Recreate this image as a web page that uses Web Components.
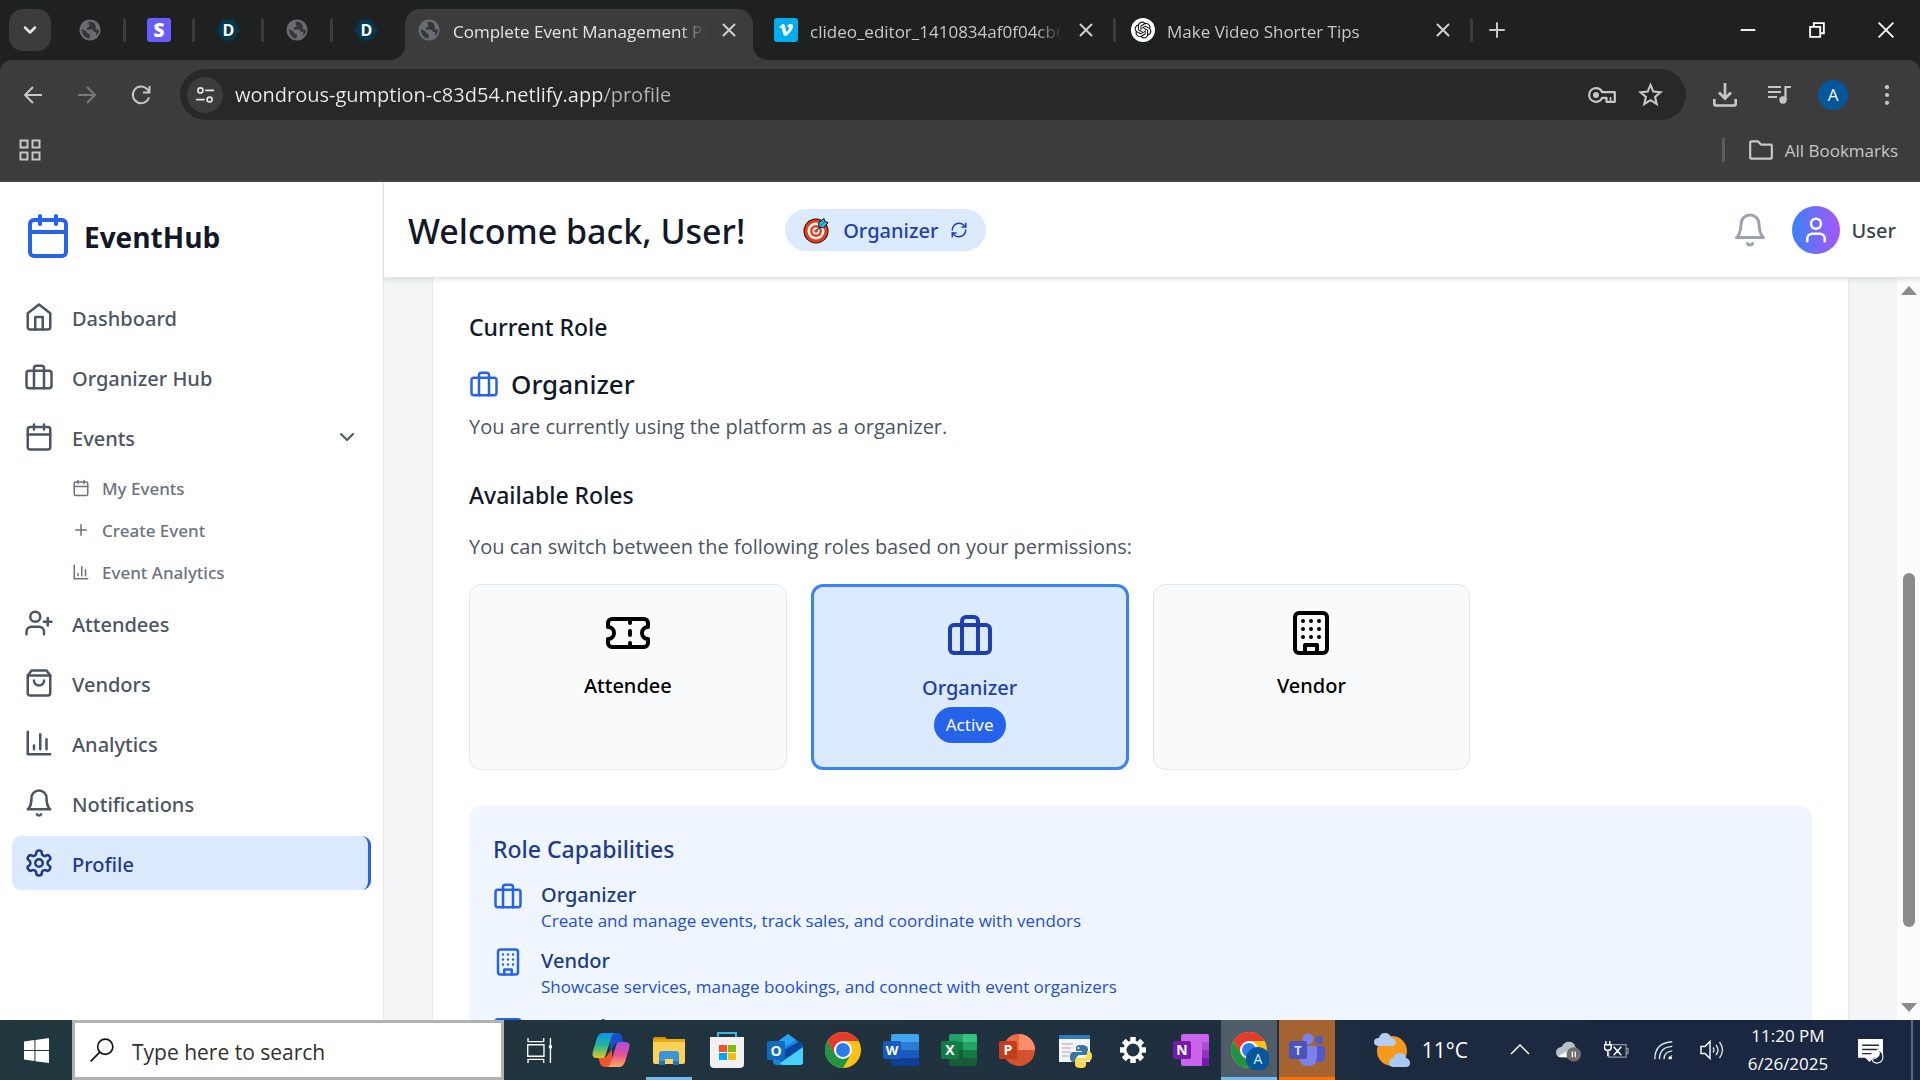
<!DOCTYPE html>
<html lang="en">
<head>
<meta charset="utf-8">
<title>Complete Event Management Platform</title>
<style>
  html, body {
    height: 100%;
    margin: 0;
  }
  body {
    --medium-font: "Noto Sans", "Open Sans", sans-serif;
    font-family: "Open Sans", "Noto Sans", sans-serif;
    font-size: 20px;
    overflow: hidden;
  }
</style>
</head>
<body>
<desktop-screen></desktop-screen>

<script>
/* ---------- icons ---------- */

// 24x24 stroked icons
const LINE_ICONS = {
  home: '<path d="m3 9 9-7 9 7v11a2 2 0 0 1-2 2H5a2 2 0 0 1-2-2z"/><path d="M9 22V12h6v10"/>',
  briefcase: '<rect width="20" height="14" x="2" y="7" rx="2"/><path d="M16 21V5a2 2 0 0 0-2-2h-4a2 2 0 0 0-2 2v16"/>',
  calendar: '<rect width="18" height="18" x="3" y="4" rx="2"/><path d="M16 2v4M8 2v4M3 10h18"/>',
  plus: '<path d="M5 12h14M12 5v14"/>',
  chart: '<path d="M3 3v18h18M18 17V9M13 17V5M8 17v-3"/>',
  'user-plus': '<path d="M16 21v-2a4 4 0 0 0-4-4H6a4 4 0 0 0-4 4v2"/><circle cx="9" cy="7" r="4"/><path d="M19 8v6M22 11h-6"/>',
  bag: '<path d="M6 2 3 6v14a2 2 0 0 0 2 2h14a2 2 0 0 0 2-2V6l-3-4Z"/><path d="M3 6h18M16 10a4 4 0 0 1-8 0"/>',
  bell: '<path d="M6 8a6 6 0 0 1 12 0c0 7 3 9 3 9H3s3-2 3-9"/><path d="M10.3 21a1.94 1.94 0 0 0 3.4 0"/>',
  settings: '<path d="M12.22 2h-.44a2 2 0 0 0-2 2v.18a2 2 0 0 1-1 1.73l-.43.25a2 2 0 0 1-2 0l-.15-.08a2 2 0 0 0-2.73.73l-.22.38a2 2 0 0 0 .73 2.73l.15.1a2 2 0 0 1 1 1.72v.51a2 2 0 0 1-1 1.74l-.15.09a2 2 0 0 0-.73 2.73l.22.38a2 2 0 0 0 2.73.73l.15-.08a2 2 0 0 1 2 0l.43.25a2 2 0 0 1 1 1.73V20a2 2 0 0 0 2 2h.44a2 2 0 0 0 2-2v-.18a2 2 0 0 1 1-1.73l.43-.25a2 2 0 0 1 2 0l.15.08a2 2 0 0 0 2.73-.73l.22-.39a2 2 0 0 0-.73-2.73l-.15-.08a2 2 0 0 1-1-1.74v-.5a2 2 0 0 1 1-1.74l.15-.09a2 2 0 0 0 .73-2.73l-.22-.38a2 2 0 0 0-2.73-.73l-.15.08a2 2 0 0 1-2 0l-.43-.25a2 2 0 0 1-1-1.73V4a2 2 0 0 0-2-2z"/><circle cx="12" cy="12" r="3"/>',
  ticket: '<path d="M2 9a3 3 0 0 1 0 6v2a2 2 0 0 0 2 2h16a2 2 0 0 0 2-2v-2a3 3 0 0 1 0-6V7a2 2 0 0 0-2-2H4a2 2 0 0 0-2 2Z"/><path d="M13 5v2M13 17v2M13 11v2"/>',
  building: '<rect width="16" height="20" x="4" y="2" rx="2"/><path d="M9 22v-4h6v4M8 6h.01M12 6h.01M16 6h.01M8 10h.01M12 10h.01M16 10h.01M8 14h.01M12 14h.01M16 14h.01"/>',
  refresh: '<path d="M3 12a9 9 0 0 1 9-9 9.75 9.75 0 0 1 6.74 2.74L21 8"/><path d="M21 3v5h-5M21 12a9 9 0 0 1-9 9 9.75 9.75 0 0 1-6.74-2.74L3 16"/><path d="M8 16H3v5"/>',
  user: '<path d="M19 21v-2a4 4 0 0 0-4-4H9a4 4 0 0 0-4 4v2"/><circle cx="12" cy="7" r="4"/>',
  'chevron-down': '<path d="m6 9 6 6 6-6"/>',
  back: '<path d="M21 12H4.500M12 4l-8 8 8 8" stroke-linecap="butt" stroke-linejoin="miter"/>',
  forward: '<path d="M3 12h16.500M12 4l8 8-8 8" stroke-linecap="butt" stroke-linejoin="miter"/>',
  reload: '<path d="M20 14.500A8.300 8.300 0 1 1 18 6l2 2.500M20.500 3v6.500H14" stroke-linecap="butt" stroke-linejoin="miter"/>',
  tune: '<circle cx="6.500" cy="6.500" r="3"/><path d="M13 6.500h9M2 17.500h9"/><circle cx="17.500" cy="17.500" r="3"/>',
  folder: '<path d="M2 5q0-1 1-1h6l3 3h9q1 0 1 1v11q0 1-1 1H3q-1 0-1-1z"/>',
  apps: '<path d="M2.500 2.500h7v7h-7zM14.500 2.500h7v7h-7zM2.500 14.500h7v7h-7zM14.500 14.500h7v7h-7z" stroke-linejoin="miter"/>',
  close: '<path d="M6.500 6.500l11 11M17.500 6.500l-11 11"/>',
  minimise: '<path d="M4 12h16" stroke-linecap="butt"/>',
  restore: '<path d="M4.500 8.500h11v11h-11zM8.500 8V4.500h11v11H16" stroke-linejoin="miter" stroke-linecap="butt"/>',
  quit: '<path d="M4 4l16 16M20 4 4 20" stroke-linecap="butt"/>',
  caret: '<path d="m3 16 9-9 9 9" stroke-linecap="butt" stroke-linejoin="miter"/>',
  search: '<circle cx="15" cy="9" r="7"/><path d="M10 14 2 22"/>'
};

// icons that carry their own fills and view boxes
const ART_ICONS = {
  globe: ['0 0 24 24', '<path fill="#696d73" d="M12 1.500C6.200 1.500 1.500 6.200 1.500 12S6.200 22.500 12 22.500 22.500 17.800 22.500 12 17.800 1.500 12 1.500z"/><path fill="#353638" d="M4 11c2 1 4 1.500 5 3.500s3 1 3 3-1 2-1 3c-4-.5-7.500-4.500-7-9.500zM10 4c1.500 1 0 2.500 1.500 3.500S9 9 8.500 10.500s3 1 5 1 1.500 2.500 3.500 2.500 1.500 2.500 1 4c2-1.500 3-3.500 3-6 0-1-2 0-3-1s.5-2-.5-3.500S17 5.500 15.500 4.500 12 3.500 10 4z"/>'],
  stripe: ['0 0 24 24', '<rect width="24" height="24" rx="3" fill="#675dff"/><text x="12" y="19" text-anchor="middle" font-family="Open Sans" font-weight="800" font-size="19" fill="#fff">S</text>'],
  dee: ['0 0 24 24', '<path d="M6.500 1.500h11L23.500 12l-6 10.500h-11L.5 12z" fill="#04384f"/><text x="12.500" y="17.500" text-anchor="middle" font-family="Open Sans" font-weight="700" font-size="16" fill="#fff">D</text>'],
  vimeo: ['0 0 24 24', '<rect width="24" height="24" rx="3" fill="#00adef"/><path transform="translate(3.500 3.500) scale(.7)" fill="#fff" d="M22 7.420c-.09 1.950-1.450 4.620-4.080 8.020C15.200 18.970 12.900 20.740 11.030 20.740c-1.160 0-2.140-1.070-2.940-3.210L6.480 11.640C5.900 9.500 5.250 8.430 4.560 8.430c-.15 0-.68.32-1.580.95L2.040 8.160c1-.87 1.970-1.750 2.940-2.620 1.330-1.150 2.320-1.750 2.980-1.810 1.570-.15 2.530.92 2.890 3.210.39 2.480.66 4.020.81 4.620.45 2.050.95 3.080 1.490 3.080.42 0 1.050-.67 1.900-2 .84-1.330 1.290-2.340 1.350-3.030.12-1.150-.33-1.720-1.350-1.720-.48 0-.97.11-1.490.33.99-3.240 2.880-4.820 5.670-4.730 2.070.06 3.050 1.400 2.930 4.030z"/>'],
  knot: ['0 0 24 24', '<circle cx="12" cy="12" r="12" fill="#fff"/><path transform="translate(3.600 3.600) scale(.7)" fill="#111" d="M22.2819 9.8211a5.9847 5.9847 0 0 0-.5157-4.9108 6.0462 6.0462 0 0 0-6.5098-2.9A6.0651 6.0651 0 0 0 4.9807 4.1818a5.9847 5.9847 0 0 0-3.9977 2.9 6.0462 6.0462 0 0 0 .7427 7.0966 5.98 5.98 0 0 0 .511 4.9107 6.051 6.051 0 0 0 6.5146 2.9001A5.9847 5.9847 0 0 0 13.2599 24a6.0557 6.0557 0 0 0 5.7718-4.2058 5.9894 5.9894 0 0 0 3.9977-2.9001 6.0557 6.0557 0 0 0-.7475-7.0729zm-9.022 12.6081a4.4755 4.4755 0 0 1-2.8764-1.0408l.1419-.0804 4.7783-2.7582a.7948.7948 0 0 0 .3927-.6813v-6.7369l2.02 1.1686a.071.071 0 0 1 .038.052v5.5826a4.504 4.504 0 0 1-4.4945 4.4944zm-9.6607-4.1254a4.4708 4.4708 0 0 1-.5346-3.0137l.142.0852 4.783 2.7582a.7712.7712 0 0 0 .7806 0l5.8428-3.3685v2.3324a.0804.0804 0 0 1-.0332.0615L9.74 19.9502a4.4992 4.4992 0 0 1-6.1408-1.6464zM2.3408 7.8956a4.485 4.485 0 0 1 2.3655-1.9728V11.6a.7664.7664 0 0 0 .3879.6765l5.8144 3.3543-2.0201 1.1685a.0757.0757 0 0 1-.071 0l-4.8303-2.7865A4.504 4.504 0 0 1 2.3408 7.872zm16.5963 3.8558L13.1038 8.364 15.1192 7.2a.0757.0757 0 0 1 .071 0l4.8303 2.7913a4.4944 4.4944 0 0 1-.6765 8.1042v-5.6772a.79.79 0 0 0-.407-.667zm2.0107-3.0231l-.142-.0852-4.7735-2.7818a.7759.7759 0 0 0-.7854 0L9.409 9.2297V6.8974a.0662.0662 0 0 1 .0284-.0615l4.8303-2.7866a4.4992 4.4992 0 0 1 6.6802 4.66zM8.3065 12.863l-2.02-1.1638a.0804.0804 0 0 1-.038-.0567V6.0742a4.4992 4.4992 0 0 1 7.3757-3.4537l-.142.0805L8.704 5.459a.7948.7948 0 0 0-.3927.6813zm1.0976-2.3654l2.602-1.4998 2.6069 1.4998v2.9994l-2.5974 1.4997-2.6067-1.4997Z"/>'],
  key: ['0 0 28 16', '<path d="M8 1.200a6.800 6.800 0 1 0 6.200 9.600H18.500V14.800H26.800V5.200H14.200A6.800 6.800 0 0 0 8 1.200z" fill="none" stroke="#c7c7c7" stroke-width="2.200" stroke-linejoin="round"/><circle cx="8" cy="8" r="3" fill="#c7c7c7"/><path d="M22.500 14v-4" stroke="#c7c7c7" stroke-width="1.600"/>'],
  star: ['0 0 24 24', '<path d="m12 2.800 2.700 6.400 6.900.6-5.200 4.500 1.600 6.800-6-3.600-6 3.600 1.600-6.800-5.200-4.500 6.900-.6z" fill="none" stroke="#c7c7c7" stroke-width="2"/>'],
  download: ['0 0 24 24', '<path d="M12 0v15M6 9.500l6 6 6-6M1.300 16v4.500q0 2 2 2h17.400q2 0 2-2V16" fill="none" stroke="#c7c7c7" stroke-width="2.700"/>'],
  queue: ['0 0 24 24', '<path d="M1 4h13M1 9h13M1 14h9" stroke="#c7c7c7" stroke-width="2"/><circle cx="16" cy="17" r="3.700" fill="#c7c7c7"/><path d="M18.500 17V4H24" fill="none" stroke="#c7c7c7" stroke-width="2.200"/>'],
  dots: ['0 0 24 24', '<g fill="#c7c7c7"><circle cx="12" cy="3.500" r="2.300"/><circle cx="12" cy="12" r="2.300"/><circle cx="12" cy="20.500" r="2.300"/></g>'],
  target: ['0 0 28 28', '<circle cx="13" cy="15" r="12.500" fill="#111"/><circle cx="13" cy="15" r="11.500" fill="#f03a17"/><circle cx="13" cy="15" r="8.500" fill="#fff"/><circle cx="13" cy="15" r="6" fill="#f03a17"/><circle cx="13" cy="15" r="3.500" fill="#fff"/><circle cx="13" cy="15" r="1.800" fill="#f03a17"/><path d="M13 15 19 9" stroke="#155a7a" stroke-width="1.500"/><path d="m16 11-.5-4L21 2.500l1 3 3 1L20.500 12z" fill="#29b6e8" stroke="#111"/><path d="m16 11 6-5.500" stroke="#0b6d95"/>'],
  windows: ['0 0 24 24', '<path fill="#fff" d="M0 3.400 10 2v9.500H0zM11 1.800 24 0v11.500H11zM0 12.500h10V22L0 20.600zM11 12.500h13V24l-13-1.800z"/>'],
  taskview: ['0 0 24 24', '<path d="M1 0v3.500h15V0M1 24v-3.500h15V24M.7 6.500h15.600v11H.7zM22.500 0v24" fill="none" stroke="#fff" stroke-width="1.300"/><path d="M21 7h3v3h-3z" fill="#fff"/>'],
  copilot: ['0 0 40 40', '<defs><linearGradient id="a" x2="0" y2="1"><stop stop-color="#1190f0"/><stop offset=".5" stop-color="#21b89a"/><stop offset="1" stop-color="#e6c722"/></linearGradient><linearGradient id="b" x2="0" y2="1"><stop stop-color="#a052e8"/><stop offset=".5" stop-color="#e94f92"/><stop offset="1" stop-color="#ffa95c"/></linearGradient></defs><path d="M19 3h7q4 0 5 4l2 6h-8l-6 8z" fill="#1b50c4"/><path d="M21 37h-7q-4 0-5-4l-2-6h8l6-8z" fill="#f0542c"/><path d="M12 3h12q-3 1-4 5l-5 16q-1 4-4 4H5q-5 0-3-7l4-13q2-5 6-5z" fill="url(#a)"/><path d="M28 37H16q3-1 4-5l5-16q1-4 4-4h6q5 0 3 7l-4 13q-2 5-6 5z" fill="url(#b)"/>'],
  explorer: ['0 0 40 40', '<path d="M4 9q0-2 2-2h10l4 4H4z" fill="#d49200"/><path d="M4 9h32v23q0 2-2 2H6q-2 0-2-2z" fill="#ffd257"/><path d="M4 12V9h12l3 0h17v3z" fill="#eaaa12"/><path d="M10 34V24q0-3 3-3h14q3 0 3 3v10h-6v-5h-8v5z" fill="#3995dc"/><path d="M10 31h6v4h-6zM24 31h6v4h-6z" fill="#2075ba"/>'],
  store: ['0 0 40 40', '<path d="M11 8V3h18v5" fill="none" stroke="#31b9ee" stroke-width="2"/><path d="M3 7h34v27q0 4-4 4H7q-4 0-4-4z" fill="#f1f1f1"/><path d="M12 15h8v7h-8z" fill="#f35325"/><path d="M21 15h8v7h-8z" fill="#81bc06"/><path d="M12 23h8v7h-8z" fill="#05a6f0"/><path d="M21 23h8v7h-8z" fill="#ffba08"/>'],
  outlook: ['0 0 40 40', '<path d="M8 15 23 4l15 11v17q0 3-3 3H12q-4 0-4-4z" fill="#1687dd"/><path d="M8 15 23 4l8 6-23 14z" fill="#2ba4f0"/><path d="m12 24 23-13 3 4v4L16 32z" fill="#0b47a0"/><path d="m38 17-23 16q1 2 4 2h16q3 0 3-3z" fill="#46d0fa"/><rect x="2" y="11" width="18" height="19" rx="2" fill="#0f6cbd"/><text x="11" y="26" text-anchor="middle" font-family="Open Sans" font-weight="700" font-size="14" fill="#fff">O</text>'],
  chrome: ['0 0 40 40', '<circle cx="20" cy="20" r="18" fill="#fbc116"/><path d="M20 11h15.600a18 18 0 0 0-31.200 0L12 24.500z" fill="#e33b2e"/><path d="M4.400 11 12.200 24.500 20 29l7.800-4.500L20 38A18 18 0 0 1 4.400 11z" fill="#229342"/><circle cx="20" cy="20" r="9" fill="#fff"/><circle cx="20" cy="20" r="7" fill="#2b7de9"/>'],
  word: ['0 0 40 40', '<path d="M12 4h24q2 0 2 2v6H10V6q0-2 2-2z" fill="#41a5ee"/><path d="M10 12h28v8H10z" fill="#2b7cd3"/><path d="M10 20h28v8H10z" fill="#185abd"/><path d="M10 28h28v6q0 2-2 2H12q-2 0-2-2z" fill="#103f91"/><rect x="2" y="11" width="18" height="18" rx="2" fill="#185abd"/><text x="11" y="25" text-anchor="middle" font-family="Open Sans" font-weight="700" font-size="13" fill="#fff">W</text>'],
  excel: ['0 0 40 40', '<path d="M12 4h12v8H10V6q0-2 2-2z" fill="#21a366"/><path d="M24 4h12q2 0 2 2v6H24z" fill="#33c481"/><path d="M10 12h14v8H10z" fill="#107c41"/><path d="M24 12h14v8H24z" fill="#21a366"/><path d="M10 20h14v8H10z" fill="#185c37"/><path d="M24 20h14v8H24z" fill="#107c41"/><path d="M10 28h28v6q0 2-2 2H12q-2 0-2-2z" fill="#185c37"/><rect x="2" y="11" width="18" height="18" rx="2" fill="#107c41"/><text x="11" y="25" text-anchor="middle" font-family="Open Sans" font-weight="700" font-size="14" fill="#fff">X</text>'],
  powerpoint: ['0 0 40 40', '<circle cx="22" cy="20" r="16" fill="#d35230"/><path d="M22 4a16 16 0 0 1 16 16H22z" fill="#ff8f6b"/><path d="M22 4A16 16 0 0 0 6 20h16z" fill="#ed6c47"/><rect x="2" y="11" width="18" height="18" rx="2" fill="#c43e1c"/><text x="11" y="25" text-anchor="middle" font-family="Open Sans" font-weight="700" font-size="14" fill="#fff">P</text>'],
  python: ['0 0 40 40', '<path d="M4 5h31v27H4z" fill="#f4f4f4"/><path d="M4 5h31v4H4z" fill="#2d7cc0"/><path d="M7 14h11M7 18h9M7 22h9M7 26h7" stroke="#c2c2c2" stroke-width="1.500"/><path d="M26 15c-5 0-5 2-5 4v2h6v1h-8c-3 0-4 2-4 5s1 5 4 5h2v-3c0-2 2-4 4-4h5c2 0 3-1 3-3v-3c0-2-2-4-7-4z" fill="#3874a6"/><path d="M26 38c5 0 5-2 5-4v-2h-6v-1h8c3 0 4-2 4-5s-1-4-4-5h-1v4c0 2-2 3-4 3h-5c-2 0-3 1-3 3v3c0 3 2 4 6 4z" fill="#ffd94d"/><circle cx="23.500" cy="18" r="1" fill="#fff"/>'],
  gear: ['0 0 40 40', '<g stroke="#fff" stroke-width="5.500"><path d="M20 7v26M7 20h26M10.800 10.800l18.400 18.400M29.200 10.800 10.800 29.200"/></g><circle cx="20" cy="20" r="9.500" fill="#fff"/><circle cx="20" cy="20" r="6.500" fill="#20323f"/>'],
  onenote: ['0 0 40 40', '<path d="M12 4h24q2 0 2 2v28q0 2-2 2H12q-2 0-2-2V6q0-2 2-2z" fill="#ca64ea"/><path d="M31 12h7v8h-7z" fill="#ae4bd5"/><path d="M31 20h7v8h-7z" fill="#9332bf"/><path d="M31 28h7v6q0 2-2 2h-5z" fill="#7719aa"/><rect x="2" y="11" width="18" height="18" rx="2" fill="#7719aa"/><text x="11" y="25" text-anchor="middle" font-family="Open Sans" font-weight="700" font-size="14" fill="#fff">N</text>'],
  'chrome-a': ['0 0 40 40', '<circle cx="20" cy="20" r="18" fill="#fbc116"/><path d="M20 11h15.600a18 18 0 0 0-31.200 0L12 24z" fill="#e33b2e"/><path d="M4.400 11 12.200 24.500 27.800 24.500 20 38A18 18 0 0 1 4.400 11z" fill="#229342"/><circle cx="20" cy="20" r="9" fill="#fff"/><circle cx="20" cy="20" r="7" fill="#2b7de9"/><circle cx="29" cy="29" r="12" fill="#06569b"/><text x="29" y="34" text-anchor="middle" font-family="Open Sans" font-size="14" fill="#dbe8f4">A</text>'],
  teams: ['0 0 40 40', '<circle cx="32" cy="10" r="4" fill="#5059c9"/><path d="M28 16h8q2 0 2 2v8q0 6-6 6h-4z" fill="#5059c9"/><circle cx="21" cy="9" r="5.500" fill="#7b83eb"/><path d="M13 16h15q2 0 2 2v8q0 10-9 10t-9-10z" fill="#7b83eb"/><rect x="2" y="11" width="18" height="18" rx="2" fill="#4b53bc"/><text x="11" y="25" text-anchor="middle" font-family="Open Sans" font-weight="700" font-size="13" fill="#d9dcff">T</text>'],
  weather: ['0 0 36 36', '<circle cx="18" cy="19" r="15" fill="#f6991d"/><path d="M5 14q-5 0-5-4t5-4q1-5 6-5t6 5q5 0 5 4t-4 4z" fill="#b4cdf0"/><path d="M20 35q-5 0-5-4t4-5q2-5 7-5t6 5q4 1 4 5t-4 4z" fill="#a9c8f2"/>'],
  onedrive: ['0 0 26 24', '<path d="M4 19q-4-1-4-5 0-5 6-6 3-6 9-5 4 1 5 5 4 2 3 11z" fill="#b9bfc7"/><path d="M2 18 15 11l4 8H5z" fill="#fff"/><circle cx="18.500" cy="16" r="7.500" fill="#6e6e6e"/><path d="M17 13v6M20 13v6" stroke="#fff" stroke-width="1.300"/>'],
  battery: ['0 0 26 24', '<path d="M8 6h15v13H5v-5M23 10h2v5h-2" fill="none" stroke="#8e97a3" stroke-width="1.300"/><path d="M2 2v4M6 2v4M.5 6h7v3q0 3-3.500 3T.5 9zM4 12v6M10 8l8 9M18 8l-8 9" fill="none" stroke="#fff" stroke-width="1.500"/>'],
  wifi: ['0 0 24 24', '<g fill="none" stroke="#dfe3e8" stroke-width="1.500"><path d="M2 22Q2 4 21 3M7 22Q7 9 21 8M12 22q0-8 9-9"/></g><path d="M17 22q0-3 4-4" fill="none" stroke="#dfe3e8"/><circle cx="19" cy="20.500" r="1.800" fill="#fff"/>'],
  volume: ['0 0 24 24', '<path d="M1 8.500h4l5-5v17l-5-5H1z" fill="none" stroke="#fff" stroke-width="1.400"/><path d="M13 9.500q2 2.500 0 5M16 7q4 5 0 10M19.500 4q6 8 0 16" fill="none" stroke="#d6dae0" stroke-width="1.400"/>'],
  notes: ['0 0 26 26', '<path d="M1 2h24v18H16l-4 4-4-4H1z" fill="#fff"/><path d="M5 8h16M5 12h16M5 16h9" stroke="#1b2a40" stroke-width="1.400"/><path d="M20 12q3 4 0 7t-6 2q2 5 6 4 5-1 5-6 0-5-5-7z" fill="#1b2a40" stroke="#fff"/>']
};

const template_ui_icon = document.createElement('template');
template_ui_icon.innerHTML = `
<style>
  :host {
    display: inline-flex;
    flex: none;
  }
  svg {
    display: block;
  }
</style>
`

class UiIcon extends HTMLElement {
  constructor() {
    super();
    this.attachShadow({mode: 'open'});
    this.shadowRoot.appendChild(template_ui_icon.content.cloneNode(true));
  }

  connectedCallback() {
    const name = this.getAttribute('name');
    const size = this.getAttribute('size') || 24;
    const art = ART_ICONS[name];
    const holder = document.createElement('template');
    if (art) {
      holder.innerHTML = `<svg width="${size}" height="${size}" viewBox="${art[0]}" aria-hidden="true">${art[1]}</svg>`;
    } else {
      const stroke = this.getAttribute('stroke') || 2;
      holder.innerHTML = `<svg width="${size}" height="${size}" viewBox="0 0 24 24" fill="none" stroke="currentColor" stroke-width="${stroke}" stroke-linecap="round" stroke-linejoin="round" aria-hidden="true">${LINE_ICONS[name]}</svg>`;
    }
    this.shadowRoot.appendChild(holder.content);
  }
}

/* ---------- browser frame ---------- */

const template_browser_tab = document.createElement('template');
template_browser_tab.innerHTML = `
<style>
  :host {
    display: flex;
    align-items: center;
    gap: 12px;
    position: relative;
    box-sizing: border-box;
    width: 348px;
    height: 51px;
    padding: 0 12px 9px;
    color: #c7c7c7;
    font-size: 17px;
  }
  :host([active]) {
    background: #3c3c3c;
    border-radius: 15px 15px 0 0;
    color: #e3e3e3;
  }
  :host([active])::before,
  :host([active])::after {
    content: "";
    position: absolute;
    bottom: 0;
    width: 15px;
    height: 15px;
  }
  :host([active])::before {
    left: -15px;
    background: radial-gradient(circle at 0 0, transparent 15px, #3c3c3c 15px);
  }
  :host([active])::after {
    right: -15px;
    background: radial-gradient(circle at 100% 0, transparent 15px, #3c3c3c 15px);
  }
  :host(:not([active]))::after {
    content: "";
    position: absolute;
    right: -6px;
    top: 9px;
    width: 3px;
    height: 24px;
    border-radius: 2px;
    background: #3c3c3c;
  }
  .title {
    flex: 1;
    overflow: hidden;
    padding-top: 3px;
    white-space: nowrap;
    line-height: 24px;
    -webkit-mask-image: linear-gradient(to right, #000 90%, transparent);
    mask-image: linear-gradient(to right, #000 90%, transparent);
  }
  button {
    display: flex;
    padding: 0;
    border: none;
    background: none;
    color: #d0d0d0;
  }
</style>
<ui-icon size="24"></ui-icon>
<span class="title"><slot></slot></span>
<button aria-label="Close tab"><ui-icon name="close" size="24"></ui-icon></button>
`

class BrowserTab extends HTMLElement {
  constructor() {
    super();
    this.attachShadow({mode: 'open'});
    const content = template_browser_tab.content.cloneNode(true);
    content.querySelector('ui-icon').setAttribute('name', this.getAttribute('icon'));
    this.shadowRoot.appendChild(content);
  }
}

const template_browser_frame = document.createElement('template');
template_browser_frame.innerHTML = `
<style>
  :host {
    display: block;
    background: #1f2120;
    color: #c7c7c7;
  }
  button {
    display: flex;
    align-items: center;
    justify-content: center;
    padding: 0;
    border: none;
    background: none;
    color: inherit;
    font: inherit;
  }
  .strip {
    display: flex;
    align-items: center;
    height: 60px;
    padding-left: 9px;
  }
  .menu {
    width: 42px;
    height: 42px;
    margin-right: 4px;
    border-radius: 14px;
    background: #3c3c3c;
    color: #e3e3e3;
  }
  .pinned {
    width: 69px;
    height: 24px;
    position: relative;
  }
  .pinned + .pinned::before {
    content: "";
    position: absolute;
    left: -1px;
    width: 3px;
    height: 24px;
    border-radius: 2px;
    background: #3c3c3c;
  }
  .tabs {
    display: flex;
    align-self: flex-end;
    gap: 9px;
    margin-left: 5px;
  }
  .new {
    width: 48px;
    margin-left: 6px;
  }
  .window {
    display: flex;
    margin-left: auto;
    color: #fff;
  }
  .window button {
    width: 69px;
  }
  .panel {
    background: #3c3c3c;
    border-bottom: 2px solid #474747;
    border-radius: 12px 12px 0 0;
  }
  .toolbar {
    display: flex;
    align-items: center;
    padding: 9px 6px;
  }
  .toolbar > button {
    width: 54px;
    height: 36px;
  }
  .dim {
    color: #7a7a7a;
  }
  .omnibox {
    display: flex;
    flex: 1;
    align-items: center;
    gap: 12px;
    height: 51px;
    margin: 0 12px;
    padding: 0 12px 0 7px;
    box-sizing: border-box;
    border-radius: 26px;
    background: #282828;
  }
  .site {
    width: 36px;
    height: 36px;
    border-radius: 18px;
    background: #3c3c3c;
    color: #e3e3e3;
  }
  input {
    flex: 1;
    min-width: 0;
    padding: 0;
    border: none;
    outline: none;
    font: inherit;
    font-size: 20px;
    color: transparent;
    background: linear-gradient(to right, #ececec 367px, #b4b4b4 367px);
    -webkit-background-clip: text;
    background-clip: text;
  }
  .actions {
    display: flex;
  }
  .actions button {
    width: 48px;
  }
  .avatar {
    width: 30px;
    height: 30px;
    border-radius: 15px;
    background: #06569b;
    color: #fff;
    font-size: 17px;
    line-height: 30px;
  }
  .bookmarks {
    display: flex;
    align-items: center;
    justify-content: space-between;
    height: 51px;
    padding: 0 22px 9px 18px;
    box-sizing: border-box;
  }
  .all {
    gap: 11px;
    height: 24px;
    padding-left: 23px;
    border-left: 3px solid #5c5c5c;
    font-size: 17px;
  }
</style>
<div class="strip">
  <button class="menu" aria-label="Search tabs"><ui-icon name="chevron-down" size="20" stroke="3"></ui-icon></button>
  <button class="pinned" aria-label="Tab"><ui-icon name="globe" size="24"></ui-icon></button>
  <button class="pinned" aria-label="Tab"><ui-icon name="stripe" size="24"></ui-icon></button>
  <button class="pinned" aria-label="Tab"><ui-icon name="dee" size="24"></ui-icon></button>
  <button class="pinned" aria-label="Tab"><ui-icon name="globe" size="24"></ui-icon></button>
  <button class="pinned" aria-label="Tab"><ui-icon name="dee" size="24"></ui-icon></button>
  <div class="tabs">
    <browser-tab icon="globe" active>Complete Event Management Platform</browser-tab>
    <browser-tab icon="vimeo">clideo_editor_1410834af0f04cb6</browser-tab>
    <browser-tab icon="knot">Make Video Shorter Tips</browser-tab>
  </div>
  <button class="new" aria-label="New tab"><ui-icon name="plus" size="24"></ui-icon></button>
  <div class="window">
    <button aria-label="Minimise"><ui-icon name="minimise" size="22"></ui-icon></button>
    <button aria-label="Restore"><ui-icon name="restore" size="22"></ui-icon></button>
    <button aria-label="Close"><ui-icon name="quit" size="22"></ui-icon></button>
  </div>
</div>
<div class="panel">
  <div class="toolbar">
    <button aria-label="Back"><ui-icon name="back" size="24"></ui-icon></button>
    <button class="dim" aria-label="Forward"><ui-icon name="forward" size="24"></ui-icon></button>
    <button aria-label="Reload"><ui-icon name="reload" size="24"></ui-icon></button>
    <div class="omnibox">
      <button class="site" aria-label="Site information"><ui-icon name="tune" size="20"></ui-icon></button>
      <input type="text" aria-label="Address" value="wondrous-gumption-c83d54.netlify.app/profile">
      <div class="actions">
        <button aria-label="Passwords"><ui-icon name="key" size="28"></ui-icon></button>
        <button aria-label="Bookmark"><ui-icon name="star" size="25"></ui-icon></button>
      </div>
    </div>
    <button aria-label="Downloads"><ui-icon name="download" size="24"></ui-icon></button>
    <button aria-label="Media"><ui-icon name="queue" size="24"></ui-icon></button>
    <button aria-label="Account"><span class="avatar">A</span></button>
    <button aria-label="Menu"><ui-icon name="dots" size="22"></ui-icon></button>
  </div>
  <div class="bookmarks">
    <button aria-label="Apps"><ui-icon name="apps" size="24"></ui-icon></button>
    <button class="all"><ui-icon name="folder" size="26"></ui-icon>All Bookmarks</button>
  </div>
</div>
`

class BrowserFrame extends HTMLElement {
  constructor() {
    super();
    this.attachShadow({mode: 'open'});
    this.shadowRoot.appendChild(template_browser_frame.content.cloneNode(true));
  }
}

/* ---------- EventHub page ---------- */

const template_nav_item = document.createElement('template');
template_nav_item.innerHTML = `
<style>
  :host {
    display: block;
    color: #4b5563;
    font-family: var(--medium-font);
    font-weight: 500;
  }
  a {
    display: flex;
    align-items: center;
    gap: 18px;
    height: 54px;
    padding: 0 12px;
    box-sizing: border-box;
    border-radius: 9px;
    color: inherit;
    text-decoration: none;
  }
  .label {
    flex: 1;
    padding-top: 2px;
    white-space: nowrap;
  }
  :host([sub]) {
    color: #6b7280;
    font-size: 17px;
  }
  :host([sub]) a {
    gap: 12px;
    height: 36px;
    padding-left: 60px;
  }
  :host([sub]) .label {
    padding-top: 0;
  }
  :host([active]) a {
    border-right: 3px solid #2563eb;
    background: #dbeafe;
    color: #1e3a8a;
  }
</style>
<a href="#"><ui-icon></ui-icon><span class="label"><slot></slot></span></a>
`

class NavItem extends HTMLElement {
  constructor() {
    super();
    this.attachShadow({mode: 'open'});
    const content = template_nav_item.content.cloneNode(true);
    const icon = content.querySelector('ui-icon');
    icon.setAttribute('name', this.getAttribute('icon'));
    icon.setAttribute('size', this.hasAttribute('sub') ? 18 : 30);
    if (this.hasAttribute('expandable')) {
      const chevron = document.createElement('ui-icon');
      chevron.setAttribute('name', 'chevron-down');
      content.querySelector('a').appendChild(chevron);
    }
    this.shadowRoot.appendChild(content);
  }
}

const template_side_bar = document.createElement('template');
template_side_bar.innerHTML = `
<style>
  :host {
    display: block;
    width: 384px;
    box-sizing: border-box;
    border-right: 1px solid #e5e7eb;
    background: #fff;
  }
  .brand {
    display: flex;
    align-items: center;
    gap: 12px;
    padding: 30px 24px;
    color: #2563eb;
  }
  .brand span {
    padding-top: 2px;
    color: #111827;
    font-size: 28px;
    font-weight: 700;
    line-height: 46px;
  }
  nav {
    display: flex;
    flex-direction: column;
    gap: 6px;
    padding: 0 12px;
  }
</style>
<div class="brand"><ui-icon name="calendar" size="48"></ui-icon><span>EventHub</span></div>
<nav>
  <nav-item icon="home">Dashboard</nav-item>
  <nav-item icon="briefcase">Organizer Hub</nav-item>
  <nav-item icon="calendar" expandable>Events</nav-item>
  <nav-item icon="calendar" sub>My Events</nav-item>
  <nav-item icon="plus" sub>Create Event</nav-item>
  <nav-item icon="chart" sub>Event Analytics</nav-item>
  <nav-item icon="user-plus">Attendees</nav-item>
  <nav-item icon="bag">Vendors</nav-item>
  <nav-item icon="chart">Analytics</nav-item>
  <nav-item icon="bell">Notifications</nav-item>
  <nav-item icon="settings" active>Profile</nav-item>
</nav>
`

class SideBar extends HTMLElement {
  constructor() {
    super();
    this.attachShadow({mode: 'open'});
    this.shadowRoot.appendChild(template_side_bar.content.cloneNode(true));
  }
}

const template_page_header = document.createElement('template');
template_page_header.innerHTML = `
<style>
  :host {
    display: flex;
    align-items: center;
    position: relative;
    height: 96px;
    padding: 0 24px;
    box-sizing: border-box;
    border-bottom: 1px solid #e5e7eb;
    background: #fff;
    box-shadow: 0 2px 4px rgba(0, 0, 0, 0.1);
  }
  h1 {
    margin: 0 40px 0 0;
    padding-top: 2px;
    color: #111827;
    font-family: var(--medium-font);
    font-size: 34px;
    font-weight: 500;
    line-height: 48px;
    white-space: nowrap;
  }
  button {
    display: flex;
    align-items: center;
    padding: 0;
    border: none;
    background: none;
    font: inherit;
  }
  .role {
    gap: 12px;
    height: 42px;
    padding: 0 18px;
    border-radius: 21px;
    background: #dbeafe;
    color: #1e40af;
    font-family: var(--medium-font);
    font-weight: 500;
  }
  .role span, .account span + span {
    padding-top: 2px;
  }
  .bell {
    margin-left: auto;
    color: #9ca3af;
  }
  .account {
    gap: 12px;
    margin-left: 24px;
    color: #374151;
    font-family: var(--medium-font);
    font-weight: 500;
  }
  .avatar {
    display: flex;
    align-items: center;
    justify-content: center;
    width: 48px;
    height: 48px;
    border-radius: 24px;
    background: linear-gradient(to right, #3b82f6, #a855f7);
    color: #fff;
  }
</style>
<h1>Welcome back, User!</h1>
<button class="role"><ui-icon name="target" size="28"></ui-icon><span>Organizer</span><ui-icon name="refresh" size="18"></ui-icon></button>
<button class="bell" aria-label="Notifications"><ui-icon name="bell" size="36"></ui-icon></button>
<button class="account"><span class="avatar"><ui-icon name="user" size="30"></ui-icon></span><span>User</span></button>
`

class PageHeader extends HTMLElement {
  constructor() {
    super();
    this.attachShadow({mode: 'open'});
    this.shadowRoot.appendChild(template_page_header.content.cloneNode(true));
  }
}

const template_role_card = document.createElement('template');
template_role_card.innerHTML = `
<style>
  :host {
    display: flex;
  }
  button {
    display: flex;
    flex: 1;
    flex-direction: column;
    align-items: center;
    padding: 24px;
    border: 1px solid #e5e7eb;
    border-radius: 12px;
    background: #f9fafb;
    color: #000;
    font: inherit;
    font-family: var(--medium-font);
    font-weight: 500;
  }
  .name {
    margin-top: 13px;
    line-height: 32px;
  }
  .badge {
    display: none;
    margin-top: 3px;
    padding: 0 12px;
    border-radius: 18px;
    background: #2563eb;
    color: #fff;
    font-size: 17px;
    font-weight: 400;
    line-height: 36px;
  }
  :host([active]) button {
    border: 3px solid #3b82f6;
    background: #dbeafe;
    color: #1e40af;
  }
  :host([active]) .badge {
    display: block;
  }
</style>
<button>
  <ui-icon size="48"></ui-icon>
  <span class="name"><slot></slot></span>
</button>
`

class RoleCard extends HTMLElement {
  constructor() {
    super();
    this.attachShadow({mode: 'open'});
    const content = template_role_card.content.cloneNode(true);
    content.querySelector('ui-icon').setAttribute('name', this.getAttribute('icon'));
    if (this.hasAttribute('active')) {
      const badge = document.createElement('span');
      badge.className = 'badge';
      badge.textContent = 'Active';
      content.querySelector('button').appendChild(badge);
    }
    this.shadowRoot.appendChild(content);
  }
}

const template_capability_item = document.createElement('template');
template_capability_item.innerHTML = `
<style>
  :host {
    display: flex;
    gap: 18px;
    color: #2563eb;
  }
  .name {
    color: #1e3a8a;
    font-family: var(--medium-font);
    font-weight: 500;
    line-height: 28px;
  }
  .text {
    color: #1d4ed8;
    font-size: 17px;
    line-height: 24px;
  }
</style>
<ui-icon size="30"></ui-icon>
<div>
  <div class="name"></div>
  <div class="text"><slot></slot></div>
</div>
`

class CapabilityItem extends HTMLElement {
  constructor() {
    super();
    this.attachShadow({mode: 'open'});
    const content = template_capability_item.content.cloneNode(true);
    content.querySelector('ui-icon').setAttribute('name', this.getAttribute('icon'));
    content.querySelector('.name').textContent = this.getAttribute('name');
    this.shadowRoot.appendChild(content);
  }
}

const template_profile_page = document.createElement('template');
template_profile_page.innerHTML = `
<style>
  :host {
    display: flex;
    min-height: 0;
    overflow: hidden;
    background: #f3f4f6;
  }
  .view {
    flex: 1;
    padding: 0 48px;
  }
  .card {
    padding: 33px 36px;
    border: solid #e5e7eb;
    border-width: 0 1px;
    background: #fff;
  }
  h2, h3, p {
    margin: 0;
    color: #111827;
    font-family: var(--medium-font);
    font-size: 23px;
    font-weight: 500;
    line-height: 32px;
  }
  p {
    color: #4b5563;
    font-family: inherit;
    font-size: 20px;
    font-weight: 400;
  }
  .current {
    display: flex;
    align-items: center;
    gap: 12px;
    margin: 23px 0 9px;
    color: #2563eb;
  }
  .current h3 {
    font-size: 26px;
    line-height: 36px;
  }
  .available {
    margin: 36px 0 20px;
  }
  .roles {
    display: grid;
    grid-template-columns: repeat(4, 1fr);
    gap: 24px;
    margin: 21px 0 36px;
  }
  .capabilities {
    display: flex;
    flex-direction: column;
    gap: 14px;
    padding: 25px 24px;
    border-radius: 12px;
    background: #eff6ff;
  }
  .capabilities h2 {
    color: #1e3a8a;
    line-height: 36px;
  }
  .scroll {
    display: flex;
    flex-direction: column;
    align-items: center;
    justify-content: space-between;
    width: 23px;
    padding: 8px 0;
    background: #fcfcfc;
  }
  .thumb {
    flex: 0 1 354px;
    width: 12px;
    margin-top: 201px;
    border-radius: 6px;
    background: #8b8b8b;
  }
  .up, .down {
    border: 8px solid transparent;
    border-top: none;
    border-bottom: 9px solid #8b8b8b;
  }
  .down {
    border-bottom: none;
    border-top: 9px solid #8b8b8b;
  }
</style>
<div class="view">
  <div class="card">
    <h2>Current Role</h2>
    <div class="current"><ui-icon name="briefcase" size="30"></ui-icon><h3>Organizer</h3></div>
    <p>You are currently using the platform as a organizer.</p>
    <h2 class="available">Available Roles</h2>
    <p>You can switch between the following roles based on your permissions:</p>
    <div class="roles">
      <role-card icon="ticket">Attendee</role-card>
      <role-card icon="briefcase" active>Organizer</role-card>
      <role-card icon="building">Vendor</role-card>
    </div>
    <section class="capabilities">
      <h2>Role Capabilities</h2>
      <capability-item icon="briefcase" name="Organizer">Create and manage events, track sales, and coordinate with vendors</capability-item>
      <capability-item icon="building" name="Vendor">Showcase services, manage bookings, and connect with event organizers</capability-item>
      <capability-item icon="ticket" name="Attendee"></capability-item>
    </section>
  </div>
</div>
<div class="scroll"><div class="up"></div><div class="thumb"></div><div class="down"></div></div>
`

class ProfilePage extends HTMLElement {
  constructor() {
    super();
    this.attachShadow({mode: 'open'});
    this.shadowRoot.appendChild(template_profile_page.content.cloneNode(true));
  }
}

/* ---------- taskbar ---------- */

const template_task_button = document.createElement('template');
template_task_button.innerHTML = `
<style>
  :host {
    display: flex;
  }
  button {
    display: flex;
    align-items: center;
    justify-content: center;
    width: 56px;
    padding: 3px 0 0;
    border: none;
    border-bottom: 3px solid transparent;
    background: none;
  }
  :host([state="open"]) button {
    width: 46px;
    margin: 0 5px;
    border-color: #76b9ed;
  }
  :host([state="current"]) button {
    border-color: #76b9ed;
    background: #4e5d69;
  }
  :host([state="alert"]) button {
    border-color: #ff7200;
    background: #a56431;
  }
</style>
<button><ui-icon size="40"></ui-icon></button>
`

class TaskButton extends HTMLElement {
  constructor() {
    super();
    this.attachShadow({mode: 'open'});
    const content = template_task_button.content.cloneNode(true);
    content.querySelector('ui-icon').setAttribute('name', this.getAttribute('icon'));
    content.querySelector('button').setAttribute('aria-label', this.getAttribute('icon'));
    this.shadowRoot.appendChild(content);
  }
}

const template_task_bar = document.createElement('template');
template_task_bar.innerHTML = `
<style>
  :host {
    display: flex;
    height: 60px;
    background: linear-gradient(to right, #20373d, #20323f 50%, #1b2740 85%);
    color: #fff;
  }
  button {
    display: flex;
    align-items: center;
    justify-content: center;
    padding: 0;
    border: none;
    background: none;
    color: inherit;
    font: inherit;
  }
  .start {
    width: 72px;
  }
  .search {
    display: flex;
    align-items: center;
    gap: 17px;
    width: 432px;
    padding-left: 14px;
    box-sizing: border-box;
    border: 3px solid #b1b1b1;
    background: #fff;
    color: #111;
  }
  input {
    flex: 1;
    min-width: 0;
    padding: 3px 0 0;
    border: none;
    outline: none;
    background: none;
    font: inherit;
    font-size: 21px;
  }
  input::placeholder {
    color: #303030;
    opacity: 1;
  }
  .view {
    width: 70px;
    margin-right: 9px;
  }
  .apps {
    display: flex;
    gap: 2px;
  }
  .tray {
    display: flex;
    margin-left: auto;
  }
  .tray button {
    width: 48px;
  }
  .tray .weather {
    gap: 12px;
    width: auto;
    margin-right: 28px;
    font-size: 21px;
  }
  .tray .clock {
    flex-direction: column;
    width: 104px;
    font-size: 17px;
    line-height: 28px;
  }
  .tray .notes {
    width: 60px;
  }
  .peek {
    width: 7px;
    margin-left: 11px;
    border-left: 2px solid #5f6a7c;
  }
</style>
<button class="start" aria-label="Start"><ui-icon name="windows" size="25"></ui-icon></button>
<label class="search"><ui-icon name="search" size="26" stroke="1.5"></ui-icon><input type="text" placeholder="Type here to search" aria-label="Type here to search"></label>
<button class="view" aria-label="Task view"><ui-icon name="taskview" size="25"></ui-icon></button>
<div class="apps">
  <task-button icon="copilot"></task-button>
  <task-button icon="explorer" state="open"></task-button>
  <task-button icon="store"></task-button>
  <task-button icon="outlook"></task-button>
  <task-button icon="chrome"></task-button>
  <task-button icon="word"></task-button>
  <task-button icon="excel"></task-button>
  <task-button icon="powerpoint"></task-button>
  <task-button icon="python"></task-button>
  <task-button icon="gear"></task-button>
  <task-button icon="onenote"></task-button>
  <task-button icon="chrome-a" state="current"></task-button>
  <task-button icon="teams" state="alert"></task-button>
</div>
<div class="tray">
  <button class="weather"><ui-icon name="weather" size="36"></ui-icon>11°C</button>
  <button aria-label="Hidden icons"><ui-icon name="caret" size="24" stroke="1.5"></ui-icon></button>
  <button aria-label="OneDrive"><ui-icon name="onedrive" size="25"></ui-icon></button>
  <button aria-label="Battery"><ui-icon name="battery" size="25"></ui-icon></button>
  <button aria-label="Network"><ui-icon name="wifi" size="22"></ui-icon></button>
  <button aria-label="Volume"><ui-icon name="volume" size="24"></ui-icon></button>
  <button class="clock"><span>11:20 PM</span><span>6/26/2025</span></button>
  <button class="notes" aria-label="Notifications"><ui-icon name="notes" size="27"></ui-icon></button>
  <div class="peek"></div>
</div>
`

class TaskBar extends HTMLElement {
  constructor() {
    super();
    this.attachShadow({mode: 'open'});
    this.shadowRoot.appendChild(template_task_bar.content.cloneNode(true));
  }
}

/* ---------- whole screen ---------- */

const template_desktop_screen = document.createElement('template');
template_desktop_screen.innerHTML = `
<style>
  :host {
    display: grid;
    grid-template-rows: auto minmax(0, 1fr) auto;
    height: 100vh;
  }
  .site {
    display: grid;
    grid-template-columns: auto minmax(0, 1fr);
    min-height: 0;
    overflow: hidden;
  }
  .main {
    display: grid;
    grid-template-rows: auto minmax(0, 1fr);
    min-height: 0;
  }
  page-header {
    z-index: 1;
  }
</style>
<browser-frame></browser-frame>
<div class="site">
  <side-bar></side-bar>
  <div class="main">
    <page-header></page-header>
    <profile-page></profile-page>
  </div>
</div>
<task-bar></task-bar>
`

class DesktopScreen extends HTMLElement {
  constructor() {
    super();
    this.attachShadow({mode: 'open'});
    this.shadowRoot.appendChild(template_desktop_screen.content.cloneNode(true));
  }
}

window.customElements.define('ui-icon', UiIcon);
window.customElements.define('browser-tab', BrowserTab);
window.customElements.define('browser-frame', BrowserFrame);
window.customElements.define('nav-item', NavItem);
window.customElements.define('side-bar', SideBar);
window.customElements.define('page-header', PageHeader);
window.customElements.define('role-card', RoleCard);
window.customElements.define('capability-item', CapabilityItem);
window.customElements.define('profile-page', ProfilePage);
window.customElements.define('task-button', TaskButton);
window.customElements.define('task-bar', TaskBar);
window.customElements.define('desktop-screen', DesktopScreen);
</script>
</body>
</html>
